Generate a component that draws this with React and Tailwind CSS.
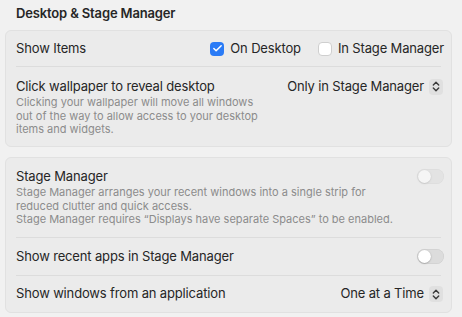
import { Check } from 'lucide-react';

function Checkbox({ checked }) {
    return checked ? (
        <span className="flex w-[14px] h-[14px] rounded-[4px] bg-[#2a7bf6] items-center justify-center shrink-0">
            <Check size={11} strokeWidth={3.2} className="text-white" />
        </span>
    ) : (
        <span className="block w-[14px] h-[14px] rounded-[4px] bg-white border border-[#cfcfcf] shrink-0" />
    );
}

function Toggle({ disabled }) {
    return (
        <span className={`block relative w-[27px] h-[15px] rounded-full bg-[#dcdcdc] shadow-[inset_0_0_0_0.5px_rgba(0,0,0,0.08)] shrink-0 ${disabled ? 'opacity-50' : ''}`}>
            <span className="absolute left-[1px] top-[1px] w-[13px] h-[13px] rounded-full bg-white shadow-[0_0.5px_1.5px_rgba(0,0,0,0.35)]" />
        </span>
    );
}

function Stepper({ label }) {
    return (
        <div className="flex items-center gap-[5px] shrink-0">
            <span className="text-[13px] tracking-[-0.15px] text-[#262626]">{label}</span>
            <span className="w-[14px] h-[16px] rounded-[4px] bg-[#e0e0e0] flex items-center justify-center">
                <svg width="8" height="11" viewBox="0 0 8 11" fill="none" stroke="#3a3a3a" strokeWidth="1.4" strokeLinecap="round" strokeLinejoin="round">
                    <path d="M1.3 4 L4 1.3 L6.7 4" />
                    <path d="M1.3 7 L4 9.7 L6.7 7" />
                </svg>
            </span>
        </div>
    );
}

export default function App() {
    return (
        <div className="w-[462px] h-[317px] bg-[#f1f1f1] overflow-hidden text-[#262626]" style={{ fontFamily: 'Inter, "Noto Sans", sans-serif' }}>
            <h1 className="pl-[16px] pt-[5px] h-[30px] text-[13px] font-semibold leading-[16px] tracking-[-0.15px]">Desktop &amp; Stage Manager</h1>

            <div className="ml-[5px] w-[447px] rounded-[6px] border border-[#e1e1e1] bg-[#ebebeb] tracking-[-0.15px]">
                <div className="h-[35px] flex items-center justify-between pl-[10px] pr-[7px]">
                    <span className="text-[13px]">Show Items</span>
                    <div className="flex items-center">
                        <Checkbox checked />
                        <span className="ml-[6px] text-[13px]">On Desktop</span>
                        <span className="ml-[17px]"><Checkbox /></span>
                        <span className="ml-[6px] text-[13px]">In Stage Manager</span>
                    </div>
                </div>
                <div className="mx-[10px] h-px bg-[#dcdcdc]" />
                <div className="flex justify-between pl-[10px] pr-[8px] pt-[11px] h-[79px]">
                    <div>
                        <div className="text-[13px] leading-[16px]">Click wallpaper to reveal desktop</div>
                        <div className="mt-[2px] text-[11px] leading-[13.5px] text-[#8c8c8c] tracking-normal">
                            Clicking your wallpaper will move all windows<br />
                            out of the way to allow access to your desktop<br />
                            items and widgets.
                        </div>
                    </div>
                    <div className="-mt-[1px]">
                        <Stepper label="Only in Stage Manager" />
                    </div>
                </div>
            </div>

            <div className="ml-[5px] mt-[10px] w-[447px] rounded-[6px] border border-[#e1e1e1] bg-[#ebebeb] tracking-[-0.15px]">
                <div className="flex justify-between pl-[10px] pr-[7px] pt-[10px] h-[79px]">
                    <div>
                        <div className="text-[13px] leading-[16px]">Stage Manager</div>
                        <div className="mt-[2px] text-[11px] leading-[13.5px] text-[#8c8c8c] tracking-normal">
                            Stage Manager arranges your recent windows into a single strip for<br />
                            reduced clutter and quick access.<br />
                            Stage Manager requires “Displays have separate Spaces” to be enabled.
                        </div>
                    </div>
                    <div className="pt-[1px]">
                        <Toggle disabled />
                    </div>
                </div>
                <div className="mx-[10px] h-px bg-[#dcdcdc]" />
                <div className="h-[37px] flex items-center justify-between pl-[10px] pr-[7px]">
                    <span className="text-[13px]">Show recent apps in Stage Manager</span>
                    <Toggle />
                </div>
                <div className="mx-[10px] h-px bg-[#dcdcdc]" />
                <div className="h-[36px] flex items-center justify-between pl-[10px] pr-[8px]">
                    <span className="text-[13px]">Show windows from an application</span>
                    <Stepper label="One at a Time" />
                </div>
            </div>
        </div>
    );
}
